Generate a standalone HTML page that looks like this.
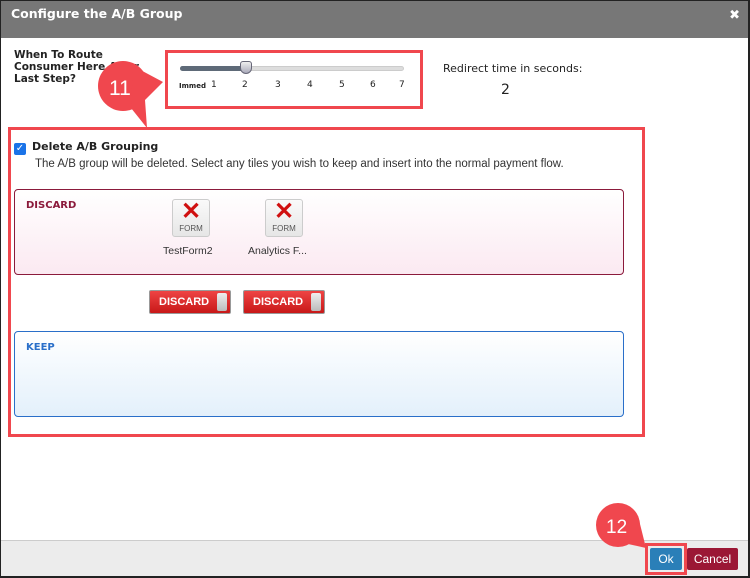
<!DOCTYPE html>
<html><head><style>
*{margin:0;padding:0;box-sizing:border-box}
body{width:750px;height:578px;overflow:hidden;background:#fff;font-family:"DejaVu Sans","Liberation Sans",sans-serif;position:relative}
.a{position:absolute}
.frame{left:0;top:0;width:750px;height:578px;border:1px solid #222;border-right:2px solid #222;border-bottom:2px solid #222}
.title{left:1px;top:1px;width:747px;height:37px;background:#777;color:#fff;font-weight:bold;font-size:12.5px;padding:5px 10px}
.lbl{font-size:11px;font-weight:bold;color:#222;line-height:12px}
.tick{font-size:9px;color:#222;top:80px}
.box{border-radius:4px}
.tile{width:38px;height:38px;border:1px solid #ccc;border-radius:3px;background:linear-gradient(#fafafa,#e6e6e6);text-align:center}
.tile .x{color:#d01010;font-size:24px;line-height:24px;font-weight:bold;font-family:"Liberation Sans",sans-serif}
.tile .f{font-size:8px;color:#555;font-family:"Liberation Sans",sans-serif}
.db{width:82px;height:24px;border:1px solid #999;border-radius:2px;background:linear-gradient(#ee4444,#c81818);color:#fff;font-weight:bold;font-size:11px;padding:5px 0 0 9px;font-family:"Liberation Sans",sans-serif}
.db i{position:absolute;right:3px;top:2px;width:10px;height:18px;background:linear-gradient(#eee,#bbb);border-radius:2px}
</style></head><body>
<div class="a frame"></div>
<div class="a title">Configure the A/B Group</div>
<div class="a" style="right:10px;top:8px;color:#fff;font-size:13px;font-weight:bold">✖</div>
<div class="a lbl" style="left:14px;top:49px;width:140px;font-size:10.5px">When To Route<br>Consumer Here After<br>Last Step?</div>
<!-- slider -->
<div class="a" style="left:180px;top:66px;width:224px;height:5px;border-radius:3px;background:#ddd;border:1px solid #ccc"></div>
<div class="a" style="left:180px;top:66px;width:66px;height:5px;border-radius:3px;background:#5e6a78"></div>
<div class="a" style="left:240px;top:61px;width:12px;height:13px;border-radius:3px 3px 6px 6px;background:linear-gradient(#eee,#aab);border:1px solid #667"></div>
<div class="a tick" style="left:179px;font-size:7px;top:82px;font-weight:bold">Immed</div>
<div class="a tick" style="left:211px">1</div><div class="a tick" style="left:242px">2</div><div class="a tick" style="left:275px">3</div><div class="a tick" style="left:307px">4</div><div class="a tick" style="left:339px">5</div><div class="a tick" style="left:370px">6</div><div class="a tick" style="left:399px">7</div>
<div class="a" style="left:165px;top:50px;width:258px;height:59px;border:3px solid #f0474e"></div>
<div class="a" style="left:443px;top:62px;font-size:11px;color:#222">Redirect time in seconds:</div>
<div class="a" style="left:501px;top:82px;font-size:14px;color:#222">2</div>
<!-- callout 11 -->
<svg class="a" style="left:95px;top:58px" width="75" height="75"><circle cx="28" cy="28" r="25" fill="#f0474e"/><path d="M38 8 L68 24 L50 42 L52 70 L36 50Z" fill="#f0474e"/><text x="14" y="37" fill="#fff" font-size="21" font-family="Liberation Sans">11</text></svg>
<!-- main region -->
<div class="a" style="left:8px;top:127px;width:637px;height:310px;border:3px solid #f0474e"></div>
<div class="a" style="left:14px;top:143px;width:12px;height:12px;background:#1a73e8;border-radius:2px;color:#fff;font-size:10px;line-height:12px;text-align:center">✓</div>
<div class="a lbl" style="left:32px;top:141px">Delete A/B Grouping</div>
<div class="a" style="left:35px;top:158px;color:#333;font-family:'Liberation Sans',sans-serif;font-size:11.5px">The A/B group will be deleted. Select any tiles you wish to keep and insert into the normal payment flow.</div>
<div class="a box" style="left:14px;top:189px;width:610px;height:86px;border:1px solid #8b1a3b;background:linear-gradient(#fff,#fbe9f1)"></div>
<div class="a lbl" style="left:26px;top:200px;color:#8b1a3b;font-size:10px">DISCARD</div>
<div class="a tile" style="left:172px;top:199px"><div class="x">✕</div><div class="f">FORM</div></div>
<div class="a" style="left:163px;top:245px;font-size:10.5px;color:#333;font-family:'Liberation Sans',sans-serif">TestForm2</div>
<div class="a tile" style="left:265px;top:199px"><div class="x">✕</div><div class="f">FORM</div></div>
<div class="a" style="left:248px;top:245px;font-size:10.5px;color:#333;font-family:'Liberation Sans',sans-serif">Analytics F...</div>
<div class="a db" style="left:149px;top:290px">DISCARD<i></i></div>
<div class="a db" style="left:243px;top:290px">DISCARD<i></i></div>
<div class="a box" style="left:14px;top:331px;width:610px;height:86px;border:1px solid #2a6fc9;background:linear-gradient(#fff,#e3f0fb)"></div>
<div class="a lbl" style="left:26px;top:342px;color:#2a6fc9;font-size:10px">KEEP</div>
<!-- footer -->
<div class="a" style="left:1px;top:540px;width:747px;height:36px;background:#ececec;border-top:1px solid #ccc"></div>
<div class="a" style="left:650px;top:548px;width:32px;height:22px;background:#2a7fb8;border-radius:2px;color:#fff;font-size:12px;text-align:center;line-height:22px;font-family:'Liberation Sans',sans-serif">Ok</div>
<div class="a" style="left:645px;top:543px;width:42px;height:32px;border:3px solid #f0474e"></div>
<div class="a" style="left:687px;top:548px;width:51px;height:22px;background:#9b1735;border-radius:2px;color:#fff;font-size:12px;text-align:center;line-height:22px;font-family:'Liberation Sans',sans-serif">Cancel</div>
<!-- callout 12 -->
<svg class="a" style="left:594px;top:500px" width="60" height="52"><circle cx="24" cy="25" r="22" fill="#f0474e"/><path d="M30 6 L44 16 L52 48 L34 44Z" fill="#f0474e"/><text x="12" y="33" fill="#fff" font-size="19" font-family="Liberation Sans">12</text></svg>
</body></html>
